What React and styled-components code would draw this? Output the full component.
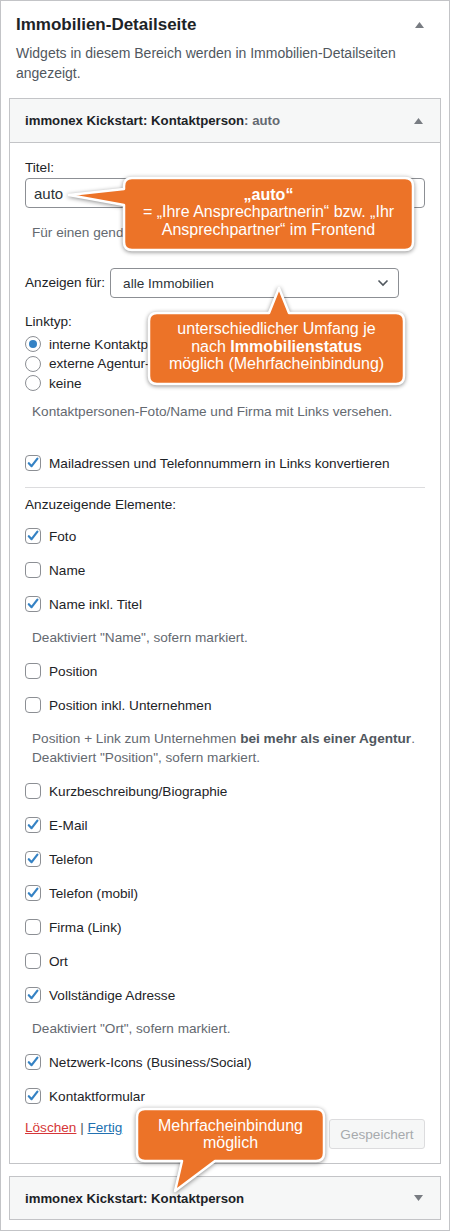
import React from 'react';
import styled, { createGlobalStyle } from 'styled-components';

const GlobalStyle = createGlobalStyle`
  html, body { margin: 0; padding: 0; background: #fff; }
  body {
    font-family: "Liberation Sans", Arial, sans-serif;
    color: #1d2327;
    -webkit-font-smoothing: antialiased;
  }
  * { box-sizing: border-box; }
`;

const ORANGE = '#ec7328';
const FS = '13.6px';

const Sidebar = styled.div`
  position: relative;
  width: 450px;
  height: 1231px;
  border: 1px solid #c3c4c7;
  padding: 0 8px 9px;
  background: #fff;
  overflow: hidden;
`;

const SidebarHead = styled.div`
  display: flex;
  align-items: center;
  justify-content: space-between;
  padding: 0 17px 0 7px;
  margin-top: 14px;
`;

const SidebarTitle = styled.h2`
  margin: 0;
  font-size: 17px;
  line-height: 20px;
  font-weight: 700;
  color: #1d2327;
`;

const SidebarDesc = styled.p`
  margin: 8px 0 0;
  padding: 0 10px 0 7px;
  font-size: 14px;
  line-height: 20px;
  color: #50575e;
`;

const Widget = styled.div`
  border: 1px solid #c3c4c7;
  background: #fff;
  margin-top: ${p => p.$mt}px;
`;

const WidgetHeader = styled.div`
  height: ${p => p.$h}px;
  display: flex;
  align-items: center;
  justify-content: space-between;
  padding: 0 17px 0 15px;
  background: #f6f7f7;
  border-bottom: ${p => (p.$open ? '1px solid #c3c4c7' : 'none')};
  font-size: 13.2px;
  font-weight: 700;
  color: #1d2327;
`;

const Muted = styled.span`
  color: #646970;
`;

const WidgetBody = styled.div`
  padding: 15px 15px 14px;
`;

const FieldLabel = styled.div`
  font-size: ${FS};
  line-height: 20px;
  color: #1d2327;
  white-space: nowrap;
  margin-top: ${p => p.$mt || 0}px;
`;

const TextInput = styled.div`
  height: 30px;
  border: 1px solid #8c8f94;
  border-radius: 4px;
  padding: 0 8px;
  display: flex;
  align-items: center;
  font-size: 15px;
  color: #2c3338;
`;

const Desc = styled.div`
  font-size: ${FS};
  line-height: 19px;
  color: #646970;
  white-space: nowrap;
  padding: 7px 0 7px 7px;
  margin-top: ${p => p.$mt || 0}px;
  b { font-weight: 700; color: #50575e; }
`;

const SelectRow = styled.div`
  display: flex;
  align-items: center;
  gap: 5px;
  margin-top: ${p => p.$mt}px;
`;

const Select = styled.div`
  width: 289px;
  height: 30px;
  border: 1px solid #8c8f94;
  border-radius: 4px;
  padding: 0 9px 0 12px;
  display: flex;
  align-items: center;
  justify-content: space-between;
  font-size: ${FS};
  color: #2c3338;
`;

const RadioList = styled.div`
  display: flex;
  flex-direction: column;
  margin-top: 2px;
`;

const OptionRow = styled.div`
  display: flex;
  align-items: center;
  gap: 8px;
  height: ${p => p.$h || 20}px;
  font-size: ${FS};
  color: #1d2327;
  white-space: nowrap;
  margin-top: ${p => p.$mt || 0}px;
`;

const ElementList = styled.div`
  margin-top: 4px;
`;

const RadioDot = styled.span`
  width: 16px;
  height: 16px;
  border-radius: 50%;
  border: 1px solid #8c8f94;
  background: #fff;
  display: inline-flex;
  align-items: center;
  justify-content: center;
  flex: none;
  &::after {
    content: '';
    width: 8px;
    height: 8px;
    border-radius: 50%;
    background: ${p => (p.$checked ? '#3582c4' : 'transparent')};
  }
`;

const Box = styled.span`
  width: 16px;
  height: 16px;
  border-radius: 4px;
  border: 1px solid #8c8f94;
  background: #fff;
  display: inline-flex;
  align-items: center;
  justify-content: center;
  flex: none;
  position: relative;
  svg { position: absolute; left: -1px; top: -1px; }
`;

const Separator = styled.hr`
  border: 0;
  border-top: 1px solid #dcdcde;
  margin: 14px 0 0;
`;

const Footer = styled.div`
  display: flex;
  align-items: flex-start;
  justify-content: space-between;
  margin-top: 5px;
`;

const Links = styled.div`
  font-size: ${FS};
  line-height: 20px;
  color: #50575e;
`;

const LinkA = styled.a`
  color: ${p => p.$color};
  text-decoration: underline;
  cursor: pointer;
`;

const SavedButton = styled.button`
  width: 96px;
  height: 30px;
  margin-top: 1px;
  border: 1px solid #dcdcde;
  border-radius: 3px;
  background: #f6f7f7;
  color: #a7aaad;
  font-family: inherit;
  font-size: ${FS};
`;

const CalloutWrap = styled.div`
  position: absolute;
  left: ${p => p.$x}px;
  top: ${p => p.$y}px;
  width: ${p => p.$w}px;
  height: ${p => p.$h}px;
  z-index: 5;
`;

const CalloutSvg = styled.svg`
  position: absolute;
  left: 0;
  top: 0;
  overflow: visible;
  filter: drop-shadow(0 1px 2px rgba(0, 0, 0, 0.45));
`;

const CalloutText = styled.div`
  position: relative;
  height: 100%;
  display: flex;
  flex-direction: column;
  align-items: center;
  justify-content: center;
  text-align: center;
  color: #fff;
  font-family: "Liberation Sans", Arial, sans-serif;
  font-size: 16px;
  line-height: 17.5px;
  padding-bottom: ${p => p.$pb || 0}px;
  b { font-weight: 700; }
`;

function TriangleIcon({ down }) {
  return (
    <svg width="9" height="6" viewBox="0 0 9 6">
      <path d={down ? 'M0 0 L9 0 L4.5 6 Z' : 'M0 6 L9 6 L4.5 0 Z'} fill="#787c82" />
    </svg>
  );
}

function Chevron() {
  return (
    <svg width="12" height="8" viewBox="0 0 12 8">
      <path d="M1.5 1.5 L6 6 L10.5 1.5" fill="none" stroke="#50575e" strokeWidth="1.6" />
    </svg>
  );
}

function Checkbox({ checked }) {
  return (
    <Box>
      {checked && (
        <svg width="16" height="16" viewBox="0 0 16 16">
          <path d="M3.8 8.2 L6.6 11.2 L12.4 3.6" fill="none" stroke="#3582c4" strokeWidth="2.2" strokeLinecap="round" strokeLinejoin="round" />
        </svg>
      )}
    </Box>
  );
}

function bubblePath(w, h, r, tail) {
  const p = [];
  p.push(`M${r},0`);
  if (tail && tail.side === 'top') p.push(`L${tail.a},0 L${tail.tx},${tail.ty} L${tail.b},0`);
  p.push(`L${w - r},0 Q${w},0 ${w},${r}`);
  p.push(`L${w},${h - r} Q${w},${h} ${w - r},${h}`);
  if (tail && tail.side === 'bottom') p.push(`L${tail.b},${h} L${tail.tx},${tail.ty} L${tail.a},${h}`);
  p.push(`L${r},${h} Q0,${h} 0,${h - r}`);
  if (tail && tail.side === 'left') p.push(`L0,${tail.b} L${tail.tx},${tail.ty} L0,${tail.a}`);
  p.push(`L0,${r} Q0,0 ${r},0 Z`);
  return p.join(' ');
}

function Callout({ x, y, w, h, tail, pb, children }) {
  return (
    <CalloutWrap $x={x} $y={y} $w={w} $h={h}>
      <CalloutSvg width={w} height={h}>
        <path d={bubblePath(w, h, 8, tail)} fill={ORANGE} stroke="#fff" strokeWidth="2.5" strokeLinejoin="round" />
      </CalloutSvg>
      <CalloutText $pb={pb}>{children}</CalloutText>
    </CalloutWrap>
  );
}

const elements = [
  { t: 'check', label: 'Foto', c: true },
  { t: 'check', label: 'Name', c: false },
  { t: 'check', label: 'Name inkl. Titel', c: true },
  { t: 'desc', text: 'Deaktiviert "Name", sofern markiert.' },
  { t: 'check', label: 'Position', c: false },
  { t: 'check', label: 'Position inkl. Unternehmen', c: false },
  {
    t: 'desc',
    text: (
      <>
        Position + Link zum Unternehmen <b>bei mehr als einer Agentur</b>.
        <br />
        Deaktiviert "Position", sofern markiert.
      </>
    ),
  },
  { t: 'check', label: 'Kurzbeschreibung/Biographie', c: false },
  { t: 'check', label: 'E-Mail', c: true },
  { t: 'check', label: 'Telefon', c: true },
  { t: 'check', label: 'Telefon (mobil)', c: true },
  { t: 'check', label: 'Firma (Link)', c: false },
  { t: 'check', label: 'Ort', c: false },
  { t: 'check', label: 'Vollständige Adresse', c: true },
  { t: 'desc', text: 'Deaktiviert "Ort", sofern markiert.' },
  { t: 'check', label: 'Netzwerk-Icons (Business/Social)', c: true },
  { t: 'check', label: 'Kontaktformular', c: true },
];

export default function App() {
  return (
    <>
      <GlobalStyle />
      <Sidebar>
        <SidebarHead>
          <SidebarTitle>Immobilien-Detailseite</SidebarTitle>
          <TriangleIcon />
        </SidebarHead>
        <SidebarDesc>Widgets in diesem Bereich werden in Immobilien-Detailseiten angezeigt.</SidebarDesc>

        <Widget $mt={15}>
          <WidgetHeader $h={44} $open>
            <span>
              immonex Kickstart: Kontaktperson<Muted>: auto</Muted>
            </span>
            <TriangleIcon />
          </WidgetHeader>
          <WidgetBody>
            <FieldLabel>Titel:</FieldLabel>
            <TextInput>auto</TextInput>
            <Desc $mt={8}>Für einen genderneutralen Titel</Desc>

            <SelectRow $mt={19}>
              <FieldLabel>Anzeigen für:</FieldLabel>
              <Select>
                alle Immobilien
                <Chevron />
              </Select>
            </SelectRow>

            <FieldLabel $mt={14}>Linktyp:</FieldLabel>
            <RadioList>
              <OptionRow $h={20}>
                <RadioDot $checked />
                interne Kontaktperson
              </OptionRow>
              <OptionRow $h={19.5}>
                <RadioDot />
                externe Agentur-Kontaktperson
              </OptionRow>
              <OptionRow $h={19.5}>
                <RadioDot />
                keine
              </OptionRow>
            </RadioList>
            <Desc $mt={2}>Kontaktpersonen-Foto/Name und Firma mit Links versehen.</Desc>

            <OptionRow $mt={25}>
              <Checkbox checked />
              Mailadressen und Telefonnummern in Links konvertieren
            </OptionRow>
            <Separator />
            <FieldLabel $mt={7}>Anzuzeigende Elemente:</FieldLabel>
            <ElementList>
              {elements.map((e, i) =>
                e.t === 'check' ? (
                  <OptionRow key={i} $h={34}>
                    <Checkbox checked={e.c} />
                    {e.label}
                  </OptionRow>
                ) : (
                  <Desc key={i}>{e.text}</Desc>
                )
              )}
            </ElementList>

            <Footer>
              <Links>
                <LinkA $color="#d63638">Löschen</LinkA> | <LinkA $color="#2271b1">Fertig</LinkA>
              </Links>
              <SavedButton disabled>Gespeichert</SavedButton>
            </Footer>
          </WidgetBody>
        </Widget>

        <Widget $mt={12}>
          <WidgetHeader $h={42}>
            <span>immonex Kickstart: Kontaktperson</span>
            <TriangleIcon down />
          </WidgetHeader>
        </Widget>

        <Callout x={123} y={177} w={289} h={72} pb={4} tail={{ side: 'left', a: 11, b: 27, tx: -55, ty: 17 }}>
          <b>„auto“</b>
          <span>= „Ihre Ansprechpartnerin“ bzw. „Ihr</span>
          <span>Ansprechpartner“ im Frontend</span>
        </Callout>

        <Callout x={148} y={312} w={255} h={71} pb={4} tail={{ side: 'top', a: 120, b: 140, tx: 130, ty: -25 }}>
          <span>unterschiedlicher Umfang je</span>
          <span>
            nach <b>Immobilienstatus</b>
          </span>
          <span>möglich (Mehrfacheinbindung)</span>
        </Callout>

        <Callout x={136} y={1108} w={187} h={52} pb={2} tail={{ side: 'bottom', a: 45, b: 78, tx: 38, ty: 82 }}>
          <span>Mehrfacheinbindung</span>
          <span>möglich</span>
        </Callout>
      </Sidebar>
    </>
  );
}
